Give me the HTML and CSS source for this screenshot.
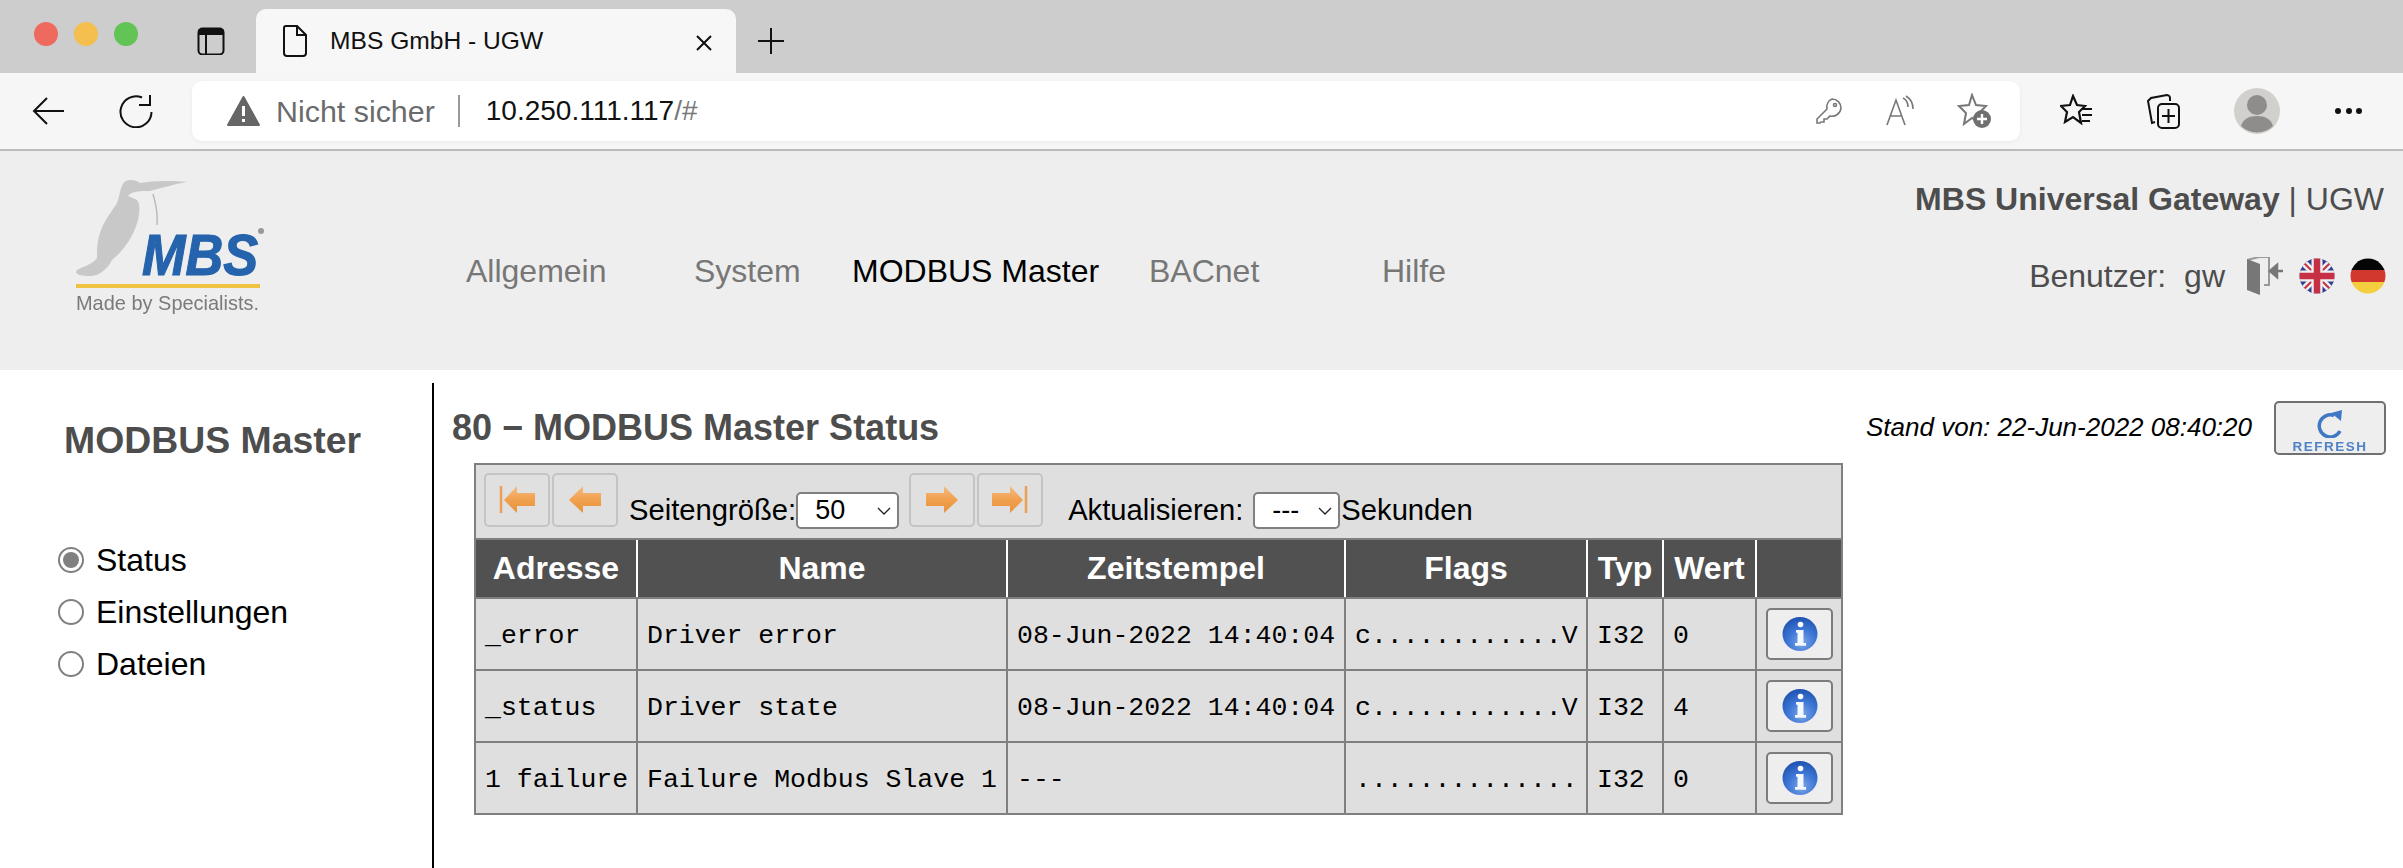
FILE: index.html
```html
<!DOCTYPE html>
<html lang="de">
<head>
<meta charset="utf-8">
<title>MBS GmbH - UGW</title>
<link rel="stylesheet" href="styles.css">
</head>
<body>
<div class="tabstrip">
  <div class="lights"><span class="light red"></span><span class="light yellow"></span><span class="light green"></span></div>
  <svg class="tabs-icon" width="28" height="28" viewBox="0 0 28 28" fill="none" stroke="#111" stroke-width="2"><rect x="1.5" y="1.5" width="25" height="26" rx="4"/><path d="M1.5 5h25" stroke-width="6"/><path d="M9 8v19"/></svg>
  <div class="tab">
    <svg class="tab-doc" width="24" height="32" viewBox="0 0 24 32" fill="none" stroke="#111" stroke-width="2"><path d="M3 1h11l9 9v18a3 3 0 0 1-3 3H4a3 3 0 0 1-3-3V3a2 2 0 0 1 2-2z"/><path d="M14 1v9h9"/></svg>
    <span class="tab-title">MBS GmbH - UGW</span>
    <svg class="tab-close" width="18" height="18" viewBox="0 0 18 18" stroke="#111" stroke-width="2"><path d="M2 2l14 14M16 2L2 16"/></svg>
  </div>
  <svg class="new-tab" width="28" height="28" viewBox="0 0 28 28" stroke="#111" stroke-width="2"><path d="M14 1v26M1 14h26"/></svg>
</div>
<div class="toolbar">
  <svg class="tb-back" width="34" height="30" viewBox="0 0 34 30" fill="none" stroke="#111" stroke-width="2"><path d="M32 15H2M15 2L2 15l13 13"/></svg>
  <svg class="tb-reload" width="34" height="34" viewBox="0 0 34 34" fill="none" stroke="#111" stroke-width="2"><path d="M23 3.500A15.500 15.500 0 1 0 32.500 18"/><path d="M20 11h11V1"/></svg>
  <div class="address">
    <svg class="warn" width="33" height="30" viewBox="0 0 33 30"><path d="M16.5 1L32 29H1z" fill="#666" stroke="#666" stroke-width="2" stroke-linejoin="round"/><path d="M16.5 10v10M16.5 23v3" stroke="#fff" stroke-width="3"/></svg>
    <span class="insecure">Nicht sicher</span>
    <span class="addr-sep"></span>
    <span class="url">10.250.111.117<span class="url-dim">/#</span></span>
    <span class="addr-icons">
      <svg width="30" height="30" viewBox="0 0 30 30" fill="none" stroke="#777" stroke-width="1.6"><path d="M17 3a9 9 0 0 1 9 9 9 9 0 0 1-11 8l-3 3h-3v3H6l-1 1H2v-4L12 13a9 9 0 0 1 5-10z"/><circle cx="20" cy="9" r="1.5"/></svg>
      <svg width="32" height="32" viewBox="0 0 32 32" fill="none" stroke="#777" stroke-width="1.6"><path d="M2 30L11 5l9 25M5.500 21h11"/><path d="M18 3c4 2 5 6 5 9M21 1c5 3 7 7 7 13"/></svg>
      <svg width="36" height="36" viewBox="0 0 36 36"><path d="M15 2l4 10 10 1-7 7 2 11-9-6-8 6 2-11-7-7 10-1z" fill="none" stroke="#777" stroke-width="2"/><circle cx="25" cy="26" r="9" fill="#707070"/><path d="M25 21v10M20 26h10" stroke="#fff" stroke-width="2.400"/></svg>
    </span>
  </div>
  <div class="tb-actions">
    <svg width="34" height="34" viewBox="0 0 34 34" fill="none" stroke="#111" stroke-width="2"><path d="M13 2l4 9 8 1-6 6 2 11-8-6-8 5 2-10-6-6 9-1z" stroke-width="2.200"/><path d="M22 15h10M22 21h10M22 27h8"/></svg>
    <svg width="34" height="36" viewBox="0 0 34 36" fill="none" stroke="#111" stroke-width="2"><path d="M8 29l-3 1-4-22 3-3 16-3c2 0 3 2 3 3v3"/><rect x="11" y="11" width="21" height="24" rx="4"/><path d="M21.500 16v14M15 23h13"/></svg>
    <svg width="46" height="46" viewBox="0 0 46 46"><circle cx="23" cy="23" r="23" fill="#d2d0cd"/><ellipse cx="23" cy="17" rx="10" ry="10" fill="#8e8d8b"/><path d="M7 38c2-7 8-10 16-10s14 3 16 10a23 23 0 0 1-32 0z" fill="#8e8d8b"/></svg>
    <span class="more"><i></i><i></i><i></i></span>
  </div>
</div>
<header class="site-head">
  <svg class="logo" width="260" height="170" viewBox="0 0 260 170">
    <g class="logo-art">
      <path d="M147 24C128 22 112 23 100 25 96 22 90 21 86 23 80 26 80 38 77 45 73 52 64 62 60 75 57 84 57 92 57 100 52 107 42 109 37 112 34 116 40 118 50 118 60 118 68 110 72 102 84 92 94 78 98 62 100 52 100 46 97 42L88 38C92 33 100 33 110 33 122 30 134 26 147 24z" fill="#c8c8c8"/>
      <path d="M113 36c3 10 5 20 4 31" fill="none" stroke="#bbb" stroke-width="1.500"/>
      <text class="logo-mbs" x="102" y="117" textLength="116" lengthAdjust="spacingAndGlyphs">MBS</text>
      <circle cx="221" cy="73" r="3" fill="#999"/>
      <rect x="36" y="126" width="184" height="4" fill="#f0c242"/>
      <text class="logo-tag" x="36" y="152" textLength="183" lengthAdjust="spacingAndGlyphs">Made by Specialists.</text>
    </g>
  </svg>
  <nav class="nav">
    <a class="nav-item">Allgemein</a>
    <a class="nav-item">System</a>
    <a class="nav-item active">MODBUS Master</a>
    <a class="nav-item">BACnet</a>
    <a class="nav-item">Hilfe</a>
  </nav>
  <div class="head-right">
    <div class="product"><b>MBS Universal Gateway</b> | UGW</div>
    <div class="user">
      <span class="user-label">Benutzer:</span>
      <span class="user-name">gw</span>
      <svg class="door" width="36" height="38" viewBox="0 0 36 38"><path d="M0 3L12 0h10v28H17" fill="none" stroke="#999" stroke-width="2"/><path d="M0 2l13 5v31L0 33z" fill="#777"/><path d="M36 14H25M30 8l-7 6 7 6z" fill="#777" stroke="#777" stroke-width="2.500"/></svg>
      <svg class="flag" width="36" height="36" viewBox="0 0 36 36"><defs><clipPath id="fc"><circle cx="18" cy="18" r="17.500"/></clipPath></defs><g clip-path="url(#fc)"><rect width="36" height="36" fill="#2f3d8f"/><path d="M0 0l36 36M36 0L0 36" stroke="#eee" stroke-width="7"/><path d="M0 0l36 36M36 0L0 36" stroke="#c53045" stroke-width="2"/><path d="M18 0v36M0 18h36" stroke="#eee" stroke-width="11"/><path d="M18 0v36M0 18h36" stroke="#c53045" stroke-width="6.500"/></g></svg>
      <svg class="flag" width="36" height="36" viewBox="0 0 36 36"><defs><clipPath id="fd"><circle cx="18" cy="18" r="17.500"/></clipPath></defs><g clip-path="url(#fd)"><rect width="36" height="12" fill="#050505"/><rect y="12" width="36" height="12" fill="#d3382d"/><rect y="24" width="36" height="12" fill="#f4ce3f"/></g></svg>
    </div>
  </div>
</header>
<main class="main">
  <aside class="side">
    <h2 class="side-title">MODBUS Master</h2>
    <ul class="side-menu">
      <li class="side-item"><span class="radio on"></span>Status</li>
      <li class="side-item"><span class="radio"></span>Einstellungen</li>
      <li class="side-item"><span class="radio"></span>Dateien</li>
    </ul>
  </aside>
  <section class="content">
    <div class="content-head">
      <h1 class="page-title">80 − MODBUS Master Status</h1>
      <span class="stamp">Stand von: 22-Jun-2022 08:40:20</span>
      <button class="refresh">
        <svg class="refresh-icon" width="26" height="28" viewBox="0 0 26 28" fill="none"><path d="M17 5.500A11 11 0 1 0 23 21" stroke="#3f78c4" stroke-width="3.500"/><path d="M14 3L25 0l-1 11z" fill="#3f78c4"/></svg>
        <span class="refresh-label">REFRESH</span>
      </button>
    </div>
    <table class="grid">
      <colgroup><col class="c1"><col class="c2"><col class="c3"><col class="c4"><col class="c5"><col class="c6"><col class="c7"></colgroup>
      <thead>
        <tr class="pager-row"><td colspan="7">
          <div class="pager">
            <button class="pg"><svg width="36" height="36" viewBox="0 0 36 36"><path d="M2 4v27" stroke="#ee9f55" stroke-width="2.500"/><path d="M5 18L18 4v7h18v13H18v7z" fill="url(#arrowfill)"/></svg></button>
            <button class="pg pg-second"><svg width="36" height="36" viewBox="0 0 36 36"><path d="M2 18L16 4v7h18v13H16v7z" fill="url(#arrowfill)"/></svg></button>
            <span class="pg-label pg-size">Seitengröße:</span>
            <span class="sel sel-size">50<svg width="14" height="8" viewBox="0 0 14 8" fill="none" stroke="#222" stroke-width="1.300"><path d="M1 1l6 6 6-6"/></svg></span>
            <button class="pg pg-next"><svg width="36" height="36" viewBox="0 0 36 36"><path d="M34 18L20 4v7H2v13h18v7z" fill="url(#arrowfill)"/></svg></button>
            <button class="pg pg-second"><svg width="36" height="36" viewBox="0 0 36 36"><path d="M34 4v27" stroke="#ee9f55" stroke-width="2.500"/><path d="M31 18L18 4v7H0v13h18v7z" fill="url(#arrowfill)"/></svg></button>
            <span class="pg-label pg-refresh">Aktualisieren:</span>
            <span class="sel sel-time">---<svg width="14" height="8" viewBox="0 0 14 8" fill="none" stroke="#222" stroke-width="1.300"><path d="M1 1l6 6 6-6"/></svg></span>
            <span class="pg-label pg-unit">Sekunden</span>
          </div>
        </td></tr>
        <tr class="head-row"><th>Adresse</th><th>Name</th><th>Zeitstempel</th><th>Flags</th><th>Typ</th><th>Wert</th><th></th></tr>
      </thead>
      <tbody>
        <tr><td>_error</td><td>Driver error</td><td>08-Jun-2022 14:40:04</td><td>c............V</td><td>I32</td><td>0</td><td class="act"><button class="info"><svg width="38" height="38" viewBox="0 0 38 38"><use href="#info-i"/></svg></button></td></tr>
        <tr><td>_status</td><td>Driver state</td><td>08-Jun-2022 14:40:04</td><td>c............V</td><td>I32</td><td>4</td><td class="act"><button class="info"><svg width="38" height="38" viewBox="0 0 38 38"><use href="#info-i"/></svg></button></td></tr>
        <tr><td>1 failure</td><td>Failure Modbus Slave 1</td><td>---</td><td>..............</td><td>I32</td><td>0</td><td class="act"><button class="info"><svg width="38" height="38" viewBox="0 0 38 38"><use href="#info-i"/></svg></button></td></tr>
      </tbody>
    </table>
  </section>
</main>
<svg class="defs" width="0" height="0">
  <defs>
    <linearGradient id="arrowfill" x1="0" y1="0" x2="0" y2="1"><stop offset="0" stop-color="#f5bd85"/><stop offset="0.5" stop-color="#f0a04e"/><stop offset="1" stop-color="#e8923c"/></linearGradient>
    <radialGradient id="ig" cx="0.55" cy="0.75" r="0.75"><stop offset="0" stop-color="#7ea6e6"/><stop offset="0.5" stop-color="#3f78d6"/><stop offset="1" stop-color="#1f52b0"/></radialGradient>
    <g id="info-i"><ellipse cx="19" cy="19" rx="17.500" ry="17" fill="url(#ig)"/><circle cx="19.500" cy="9.500" r="2.800" fill="#fff"/><path d="M15 15h7.500v13h2.500v2.800H14V28h2.500V17.800H15z" fill="#f4f7fc"/></g>
  </defs>
</svg>
</body>
</html>
```
FILE: styles.css
```css
* { box-sizing: border-box; }
html, body { margin: 0; padding: 0; height: 100%; }
body { width: 2403px; height: 868px; overflow: hidden; background: #fff; font-family: "Liberation Sans", Arial, sans-serif; color: #000; display: flex; flex-direction: column; }

.tabstrip { height: 73px; background: #cdcdcd; display: flex; align-items: flex-start; flex: none; }
.lights { display: flex; gap: 16px; padding: 22px 0 0 34px; width: 197px; flex: none; }
.light { width: 24px; height: 24px; border-radius: 50%; }
.red { background: #ee6a5f; }
.yellow { background: #f5bf4f; }
.green { background: #61c454; }
.tabs-icon { margin-top: 27px; flex: none; }
.tab { margin-left: 31px; width: 480px; height: 64px; margin-top: 9px; background: #f7f7f7; border-radius: 10px 10px 0 0; display: flex; align-items: center; padding: 0 23px 0 27px; flex: none; }
.tab-title { font-size: 24.6px; margin-left: 23px; flex: 1; color: #111; }
.tab-close { margin-top: 4px; }
.new-tab { margin: 27px 0 0 21px; flex: none; }

.toolbar { height: 76px; background: #f6f6f6; display: flex; align-items: center; flex: none; padding-left: 32px; }
.tb-back { flex: none; }
.tb-reload { margin-left: 53px; flex: none; }
.address { width: 1828px; height: 60px; margin-left: 39px; background: #fff; border-radius: 10px; display: flex; align-items: center; padding-left: 35px; box-shadow: 0 1px 4px rgba(0,0,0,.05); flex: none; }
.insecure { font-size: 30.4px; color: #6b6b6b; margin-left: 16px; }
.addr-sep { width: 2px; height: 32px; background: #999; margin: 0 26px 0 23px; }
.url { font-size: 28px; color: #111; }
.url-dim { color: #777; }
.addr-icons { margin-left: auto; display: flex; align-items: center; gap: 40px; padding-right: 27px; }
.tb-actions { display: flex; align-items: center; flex: 1; padding-left: 40px; gap: 53px; }
.more { display: flex; gap: 4.5px; margin-left: 2px; }
.more i { width: 6px; height: 6px; border-radius: 50%; background: #111; display: block; }

.site-head { height: 221px; background: #eee; border-top: 2px solid #bcbcbc; display: flex; flex: none; }
.logo { margin-left: 40px; margin-top: 7px; flex: none; }
.logo-art { filter: blur(0.6px); }
.logo-mbs { font: italic bold 58px "Liberation Sans", sans-serif; fill: #2563ac; stroke: #2563ac; stroke-width: 1.2px; }
.logo-tag { font: 21px "Liberation Sans", sans-serif; fill: #7a7a7a; }
.nav { display: grid; grid-template-columns: 228px 158px 297px 233px auto; margin-left: 166px; height: 50px; margin-top: 95px; flex: none; }
.nav-item { font-size: 32px; color: #777; white-space: nowrap; line-height: 50px; }
.nav-item.active { color: #000; }
.head-right { margin-left: auto; padding-right: 17px; display: flex; flex-direction: column; align-items: flex-end; }
.product { font-size: 32px; color: #4d4d4d; margin: 30px 2px 0 0; line-height: 36px; }
.user { display: flex; align-items: center; margin-top: 40px; font-size: 32px; color: #4d4d4d; }
.user-name { margin-left: 18px; }
.door { margin-left: 22px; filter: blur(0.4px); }
.flag { margin-left: 16px; filter: blur(0.4px); }
.flag + .flag { margin-left: 15px; }

.main { flex: 1; display: flex; padding-top: 13px; min-height: 0; }
.side { width: 434px; height: 100%; border-right: 2px solid #000; flex: none; padding-top: 35px; }
.side-title { margin: 0 0 0 64px; font-size: 37.4px; line-height: 44px; color: #4d4d4d; font-weight: bold; white-space: nowrap; }
.side-menu { list-style: none; margin: 72px 0 0; padding: 0 0 0 58px; }
.side-item { display: flex; align-items: center; font-size: 32px; height: 52px; }
.radio { width: 26px; height: 26px; border: 2px solid #808080; border-radius: 50%; margin-right: 12px; background: #fff; flex: none; }
.radio.on { padding: 3px; background: #808080 content-box; }

.content { flex: 1; padding-left: 19px; }
.content-head { display: flex; align-items: center; height: 78px; padding: 11px 17px 0 0; margin-bottom: 2px; }
.page-title { font-size: 36px; margin: 0 0 0 -1px; line-height: 44px; color: #4d4d4d; font-weight: bold; white-space: nowrap; }
.stamp { margin-left: auto; font-size: 26px; font-style: italic; color: #000; }
.refresh { margin-left: 22px; width: 112px; height: 54px; background: #eee; border: 2px solid #707070; border-radius: 5px; padding: 0; display: flex; flex-direction: column; align-items: center; justify-content: flex-end; }
.refresh-icon { margin-bottom: 3px; filter: blur(0.4px); }
.refresh-label { font: bold 13.5px "Liberation Sans", sans-serif; color: #4f83c5; letter-spacing: 1.5px; line-height: 12px; filter: blur(0.4px); }

.grid { border-collapse: collapse; table-layout: fixed; width: 1367px; margin-left: 21px; border: 2px solid #808080; font-family: "Liberation Mono", monospace; font-size: 26.5px; background: #dfdfdf; }
.c1 { width: 162px; } .c2 { width: 370px; } .c3 { width: 338px; } .c4 { width: 242px; } .c5 { width: 76px; } .c6 { width: 93px; } .c7 { width: 86px; }
.grid td { border: 2px solid #808080; padding: 4px 9px 0; height: 72px; white-space: nowrap; overflow: hidden; }
.grid .act { padding: 0 0 0 9px; }
.pager-row td { height: 75px !important; padding: 0 !important; font-family: "Liberation Sans", sans-serif; vertical-align: top; }
.pager { display: flex; align-items: flex-end; height: 73px; padding: 8px 0 0 8px; font-size: 29.2px; }
.pg { width: 66px; height: 54px; background: #e0e0e0; border: 2px solid #c4c4c4; border-radius: 5px; padding: 0; display: flex; align-items: center; justify-content: center; align-self: flex-start; }
.pg svg { filter: blur(0.5px); }
.pg-second { margin-left: 2px; }
.pg-next { margin-left: 10px; }
.pg-label { margin-bottom: 11px; white-space: nowrap; line-height: 34px; }
.pg-size { margin-left: 11px; }
.pg-refresh { margin-left: 25px; margin-right: 10px; }
.pg-unit { margin-left: 1px; }
.sel { display: flex; align-items: center; justify-content: space-between; height: 37px; background: #fff; border: 2px solid #808080; border-radius: 5px; font-size: 27px; padding: 0 6px 0 17px; margin-bottom: 9px; }
.sel-size { width: 103px; }
.sel-time { width: 87px; }
.head-row th { background: #515151; color: #fff; font-family: "Liberation Sans", sans-serif; font-size: 32px; font-weight: bold; height: 59px; padding: 0; border-left: 2px solid #fff; border-right: 2px solid #fff; border-bottom: 2px solid #808080; border-top: 2px solid #808080; white-space: nowrap; }
.head-row th:first-child { border-left-color: #808080; }
.head-row th:last-child { border-right-color: #808080; }
.info { width: 67px; height: 52px; display: flex; align-items: center; justify-content: center; background: #eee; border: 2px solid #7c7c7c; border-radius: 5px; padding: 0; }
.info svg { filter: blur(0.4px); }
.defs { position: absolute; }
```
